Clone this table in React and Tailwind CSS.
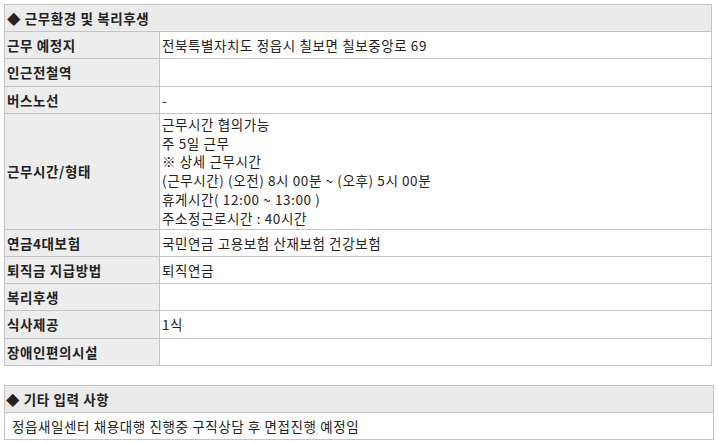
const rows = [
  { label: "근무 예정지", value: "전북특별자치도 정읍시 칠보면 칠보중앙로 69" },
  { label: "인근전철역", value: "" },
  { label: "버스노선", value: "-" },
  {
    label: "근무시간/형태",
    value: [
      "근무시간 협의가능",
      "주 5일 근무",
      "※ 상세 근무시간",
      "(근무시간) (오전) 8시 00분 ~ (오후) 5시 00분",
      "휴게시간( 12:00 ~ 13:00 )",
      "주소정근로시간 : 40시간",
    ],
  },
  { label: "연금4대보험", value: "국민연금 고용보험 산재보험 건강보험" },
  { label: "퇴직금 지급방법", value: "퇴직연금" },
  { label: "복리후생", value: "" },
  { label: "식사제공", value: "1식" },
  { label: "장애인편의시설", value: "" },
];

const font = { fontFamily: "'Malgun Gothic', 'Noto Sans CJK KR', sans-serif" };

export default function App() {
  return (
    <div
      className="w-[719px] h-[443px] bg-white pt-[4px] pl-[4px] text-[13.5px] tracking-[0.6px] leading-[18px] text-[#222]"
      style={font}
    >
      {/* 근무환경 표 */}
      <table className="w-[708px] border-collapse table-fixed">
        <colgroup>
          <col className="w-[155px]" />
          <col />
        </colgroup>
        <tbody>
          <tr>
            <th
              colSpan={2}
              className="h-[27px] bg-[#ebebeb] border border-[#c4c4c4] px-[2px] text-left font-bold"
            >
              ◆ 근무환경 및 복리후생
            </th>
          </tr>
          {rows.map((row) => (
            <tr key={row.label}>
              <th className="h-[27.25px] bg-[#ededed] border border-[#c4c4c4] px-[2px] text-left font-bold">
                {row.label}
              </th>
              <td className="border border-[#c4c4c4] px-[2px] py-0">
                {Array.isArray(row.value) ? (
                  <div className="leading-[18.8px] py-[1px]">
                    {row.value.map((line) => (
                      <div key={line}>{line}</div>
                    ))}
                  </div>
                ) : (
                  row.value
                )}
              </td>
            </tr>
          ))}
        </tbody>
      </table>

      {/* 기타 입력 사항 */}
      <table className="w-[710px] border-collapse mt-[19px]">
        <tbody>
          <tr>
            <th className="h-[27px] bg-[#ebebeb] border border-[#c4c4c4] px-[1px] text-left font-bold">
              ◆ 기타 입력 사항
            </th>
          </tr>
          <tr>
            <td className="h-[27px] border border-[#c4c4c4] px-[7px]">
              정읍새일센터 채용대행 진행중 구직상담 후 면접진행 예정임
            </td>
          </tr>
        </tbody>
      </table>
    </div>
  );
}
